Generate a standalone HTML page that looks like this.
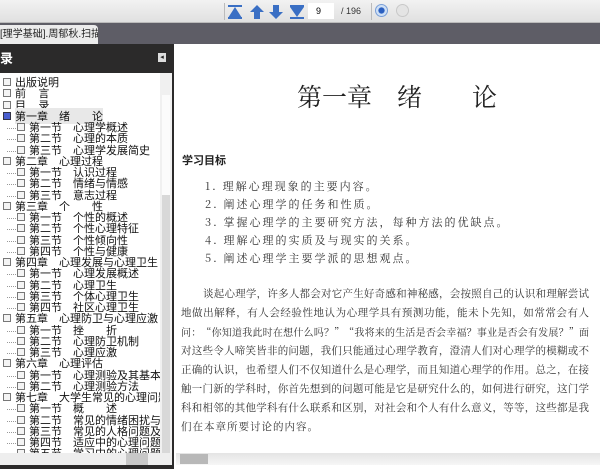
<!DOCTYPE html><html><head><meta charset="utf-8"><style>
*{margin:0;padding:0;box-sizing:border-box}
body{width:600px;height:469px;overflow:hidden;background:#fff;font-family:"Liberation Sans","Noto Sans CJK SC",sans-serif;position:relative}
.a{position:absolute}
#tb{left:0;top:0;width:600px;height:23px;background:linear-gradient(#f2f2f2,#e0e0e0);border-bottom:1px solid #bbb}
#tabs{left:0;top:23px;width:600px;height:21px;background:#5e5d66}
#tab{left:0;top:25px;width:98px;height:19px;background:#ececec;font-size:10px;line-height:19px;color:#222;border-radius:0 4px 0 0;white-space:nowrap;overflow:hidden}
#lp{left:0;top:44px;width:174px;height:425px;background:#2b2a2a}
#hd{left:0;top:44px;width:172px;height:29px;color:#fff;font-size:13px;line-height:29px;font-weight:bold}
#tree{left:0;top:73px;width:160px;height:380px;background:#fff;overflow:hidden;font-family:"Noto Sans CJK SC",sans-serif;font-size:11px;color:#111}
.r{height:11.25px;line-height:11.25px;white-space:nowrap;position:relative}
.r i{display:inline-block;width:8px;height:8px;border:1px solid #777;background:#f4f4f4;vertical-align:middle;margin:0 4px 0 3px;position:relative;top:-1px}
.r.s i{margin-left:17px}
.r.s:before{content:"";position:absolute;left:7px;top:6px;width:9px;border-top:1px dotted #999}
#vs{left:160px;top:73px;width:12px;height:380px;background:#f0f0f0}
#hs{left:0;top:453px;width:172px;height:12px;background:#eee}
#main{left:174px;top:44px;width:426px;height:425px;background:#fff}
.p{font-family:"Noto Serif CJK SC",serif;color:#333}
.pl div{height:19px;line-height:19px;text-align:justify;text-align-last:justify;white-space:nowrap}
#mhs{left:176px;top:453px;width:424px;height:12px;background:linear-gradient(#e4e4e4,#f6f6f6)}
</style></head><body>
<div class="a" id="tb"></div>
<div class="a" style="left:224px;top:3px;width:1px;height:17px;background:#bbb"></div>
<svg class="a" style="left:226px;top:3px" width="80" height="18">
<g fill="#3a6fc4"><rect x="2" y="2" width="14" height="2"/><path d="M9 4 L16 15 L2 15Z"/><rect x="2" y="14" width="14" height="2"/>
<path d="M31 2 L38 9 L34 9 L34 16 L28 16 L28 9 L24 9Z"/>
<path d="M50 16 L57 9 L53 9 L53 2 L47 2 L47 9 L43 9Z"/>
<rect x="64" y="2" width="14" height="2"/><path d="M64 4 L78 4 L71 14Z"/><rect x="64" y="14" width="14" height="2"/></g></svg>
<div class="a" style="left:308px;top:3px;width:26px;height:16px;background:#fff;font-size:9px;line-height:16px;padding-left:8px">9</div>
<div class="a" style="left:341px;top:3px;font-size:9px;line-height:16px;color:#333">/ 196</div>
<div class="a" style="left:371px;top:3px;width:1px;height:17px;background:#bbb"></div>
<div class="a" style="left:375px;top:4px;width:13px;height:13px;border-radius:50%;background:radial-gradient(#2a5fc0 35%,#cfe0f5 45%);border:1px solid #7a9fd8"></div>
<div class="a" style="left:396px;top:4px;width:13px;height:13px;border-radius:50%;background:#e4e4e4;border:1px solid #c8c8c8"></div>
<div class="a" id="tabs"></div>
<div class="a" id="tab">[理学基础].周郁秋.扫描版&nbsp; <b>✕</b></div>
<div class="a" id="lp"></div>
<div class="a" id="hd">录</div>
<div class="a" style="left:158px;top:53px;width:8px;height:9px;background:#ddd;color:#222;font-size:7px;line-height:9px;text-align:center">◂</div>
<div class="a" id="tree" style="padding-top:4px">
<div class="r"><i></i>出版说明</div>
<div class="r"><i></i>前&nbsp;&nbsp;&nbsp;&nbsp;&nbsp;言</div>
<div class="r"><i></i>目&nbsp;&nbsp;&nbsp;&nbsp;&nbsp;录</div>
<div class="r"><i style="background:#4a5fd0;border-color:#334"></i><span style="background:#e8e8e8">第一章　绪　　论</span></div>
<div class="r s"><i></i>第一节　心理学概述</div>
<div class="r s"><i></i>第二节　心理的本质</div>
<div class="r s"><i></i>第三节　心理学发展简史</div>
<div class="r"><i></i>第二章　心理过程</div>
<div class="r s"><i></i>第一节　认识过程</div>
<div class="r s"><i></i>第二节　情绪与情感</div>
<div class="r s"><i></i>第三节　意志过程</div>
<div class="r"><i></i>第三章　个　　性</div>
<div class="r s"><i></i>第一节　个性的概述</div>
<div class="r s"><i></i>第二节　个性心理特征</div>
<div class="r s"><i></i>第三节　个性倾向性</div>
<div class="r s"><i></i>第四节　个性与健康</div>
<div class="r"><i></i>第四章　心理发展与心理卫生</div>
<div class="r s"><i></i>第一节　心理发展概述</div>
<div class="r s"><i></i>第二节　心理卫生</div>
<div class="r s"><i></i>第三节　个体心理卫生</div>
<div class="r s"><i></i>第四节　社区心理卫生</div>
<div class="r"><i></i>第五章　心理防卫与心理应激</div>
<div class="r s"><i></i>第一节　挫　　折</div>
<div class="r s"><i></i>第二节　心理防卫机制</div>
<div class="r s"><i></i>第三节　心理应激</div>
<div class="r"><i></i>第六章　心理评估</div>
<div class="r s"><i></i>第一节　心理测验及其基本特征</div>
<div class="r s"><i></i>第二节　心理测验方法</div>
<div class="r"><i></i>第七章　大学生常见的心理问题及</div>
<div class="r s"><i></i>第一节　概　　述</div>
<div class="r s"><i></i>第二节　常见的情绪困扰与调适</div>
<div class="r s"><i></i>第三节　常见的人格问题及矫正</div>
<div class="r s"><i></i>第四节　适应中的心理问题及调</div>
<div class="r s"><i></i>第五节　学习中的心理问题及调</div>
</div>
<div class="a" id="vs"><div class="a" style="left:2px;top:122px;width:8px;height:258px;background:#d8d8d8"></div><div class="a" style="left:2px;top:22px;width:8px;height:100px;background:#fbfbfb"></div></div>
<div class="a" id="hs"><div class="a" style="left:126px;top:0;width:22px;height:12px;background:#c8c8c8"></div></div>
<div class="a" id="main"></div>
<div class="a p" style="left:297px;top:80px;font-size:25px;line-height:32px;color:#222;white-space:pre">第一章　绪　　论</div>
<div class="a" style="left:182px;top:152px;font-size:11px;font-weight:bold;font-family:'Noto Sans CJK SC',sans-serif;color:#222">学习目标</div>
<div class="a p" style="left:205px;top:177px;font-size:11px;line-height:18px;letter-spacing:2px">
<div>1. 理解心理现象的主要内容。</div><div>2. 阐述心理学的任务和性质。</div><div>3. 掌握心理学的主要研究方法，每种方法的优缺点。</div><div>4. 理解心理的实质及与现实的关系。</div><div>5. 阐述心理学主要学派的思想观点。</div></div>
<div class="a p pl" style="left:181px;top:284px;width:408px;font-size:10.5px">
<div style="padding-left:22px">谈起心理学，许多人都会对它产生好奇感和神秘感，会按照自己的认识和理解尝试</div>
<div>地做出解释，有人会经验性地认为心理学具有预测功能，能未卜先知，如常常会有人</div>
<div style="font-size:10px">问：“你知道我此时在想什么吗？”“我将来的生活是否会幸福？事业是否会有发展？”面</div>
<div>对这些令人啼笑皆非的问题，我们只能通过心理学教育，澄清人们对心理学的模糊或不</div>
<div>正确的认识，也希望人们不仅知道什么是心理学，而且知道心理学的作用。总之，在接</div>
<div>触一门新的学科时，你首先想到的问题可能是它是研究什么的，如何进行研究，这门学</div>
<div>科和相邻的其他学科有什么联系和区别，对社会和个人有什么意义，等等，这些都是我</div>
<div style="text-align:left;text-align-last:left;letter-spacing:1px">们在本章所要讨论的内容。</div>
</div>
<div class="a" id="mhs"><div class="a" style="left:4px;top:1px;width:28px;height:10px;background:#b8b8b8"></div></div>
</body></html>
